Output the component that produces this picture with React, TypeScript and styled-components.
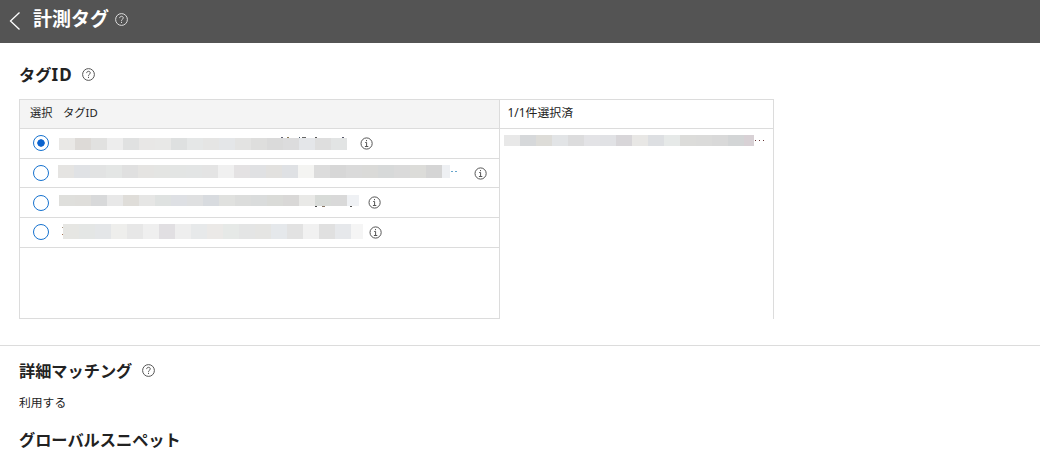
import React from "react";
import styled, { createGlobalStyle } from "styled-components";

const Global = createGlobalStyle`
  * { box-sizing: border-box; }
  body { margin: 0; background: #fff; color: #222; font-family: "Noto Sans", "Noto Sans CJK JP", sans-serif; }
  h1, h2, p { margin: 0; }
`;
const Page = styled.main`height: 456px; overflow: hidden; display: flex; flex-direction: column;`;
const Header = styled.header`
  height: 43px; flex: none; background: #545454; color: #fff;
  display: flex; align-items: center; padding: 0 0 5px 9px;
`;
const Back = styled.svg`width: 12px; height: 20px; margin: 4px 12px 0 0; fill: none; stroke: #fff; stroke-width: 1.3;`;
const PageTitle = styled.h1`font-size: 19px; line-height: 30px; font-weight: 700; white-space: nowrap; width: 82px;`;
const Badge = styled.svg<{ $color: string }>`
  width: 13px; height: 13px; flex: none; display: block; fill: none; stroke: ${(p) => p.$color}; stroke-width: 1;
`;
const TagSection = styled.section`height: 303px; flex: none; padding: 20px 0 0 19px; border-bottom: 1px solid #dcdcdc;`;
const Section = styled.section`padding: 13px 0 0 19px;`;
const Heading = styled.div`
  display: flex; align-items: center; height: 24px;
  svg { margin-bottom: 2px; }
`;
const Title = styled.h2<{ $gap?: number }>`
  font-size: 16.2px; line-height: 24px; font-weight: 700; white-space: nowrap; margin-right: ${(p) => p.$gap ?? 0}px;
`;
const Latin = styled.span`font-size: 17px; letter-spacing: 1.2px;`;
const Body = styled.p`font-size: 11.8px; line-height: 18px; margin: 10px 0 17px;`;
const Picker = styled.div`
  display: grid; grid-template-columns: 481px 274px; width: 755px; height: 220px; margin-top: 12px;
`;
const Available = styled.div`border: 1px solid #dcdcdc;`;
const Selected = styled.div`border: solid #dcdcdc; border-width: 1px 1px 0 0;`;
const ColumnHead = styled.div<{ $fill?: string }>`
  height: 29px; border-bottom: 1px solid #dcdcdc; background: ${(p) => p.$fill ?? "#fff"};
  font-size: ${(p) => (p.$fill ? 11.3 : 11.9)}px; line-height: ${(p) => (p.$fill ? 26 : 24)}px;
  display: flex; padding-left: ${(p) => (p.$fill ? 10 : 7.5)}px;
`;
const SelectLabel = styled.span`width: 33px; font-size: 11.2px;`;
const Row = styled.div<{ $h: number }>`
  height: ${(p) => p.$h}px; border-bottom: 1px solid #dcdcdc; display: flex; align-items: flex-start; padding-left: 13px;
`;
const Radio = styled.span<{ $on?: boolean; $top: number }>`
  width: 16px; height: 16px; flex: none; margin-top: ${(p) => p.$top}px; border: 1.4px solid #1672cf; border-radius: 50%;
  background: ${(p) => (p.$on ? "radial-gradient(circle, #0b63ce 3.4px, #fff 4px)" : "#fff")};
`;
const Mask = styled.div<{ $left: number; $top: number; $w: number; $h: number }>`
  position: relative; display: flex; flex: none;
  margin: ${(p) => p.$top}px 0 0 ${(p) => p.$left}px; width: ${(p) => p.$w}px; height: ${(p) => p.$h}px;
`;
const Cell = styled.i<{ $c: string; $last: boolean }>`flex: ${(p) => (p.$last ? "1 1 0" : "0 0 16px")}; background: ${(p) => p.$c};`;
const Specks = styled.svg`position: absolute; left: 0; top: 0; overflow: visible; width: 1px; height: 1px;`;
const InfoSlot = styled.span<{ $gap: number }>`margin: 8px 0 0 ${(p) => p.$gap}px;`;

const Help = ({ color = "#555" }: { color?: string }) => (
  <Badge $color={color} viewBox="0 0 13 13">
    <circle cx="6.5" cy="6.5" r="5.9" />
    <path d="M4.7 5.1C4.7 3.9 5.4 3.3 6.5 3.3S8.3 4 8.3 5C8.3 6.2 6.5 6.2 6.5 7.8M6.5 8.8V10" />
  </Badge>
);
const Info = () => (
  <Badge $color="#555" viewBox="0 0 13 13">
    <circle cx="6.6" cy="6.5" r="5.6" />
    <path d="M5.2 5.5H6.6V9.4M4.9 9.5H8.3M6.5 3V4.2" />
  </Badge>
);

type Speck = [number, number, number, string];
type Strip = { left: number; top: number; w: number; h: number; colors: string; specks?: Speck[] };
const MaskStrip = ({ left, top, w, h, colors, specks = [] }: Strip) => {
  const list = colors.split(" ");
  return (
    <Mask $left={left} $top={top} $w={w} $h={h}>
      {list.map((c, i) => <Cell key={i} $c={"#" + c} $last={i === list.length - 1} />)}
      <Specks>{specks.map(([x, y, width, fill], i) => <rect key={i} x={x} y={y} width={width} height="1" fill={fill} />)}</Specks>
    </Mask>
  );
};

const rows: { h: number; radioTop: number; gap: number; strip: Strip }[] = [
  { h: 30, radioTop: 6, gap: 13, strip: { left: 10, top: 9, w: 288, h: 12,
    colors: "e9e8e6 dddad7 e1e1e0 ededed e0e1e1 e8e7e6 e8e8e7 dee0e0 e5e7e7 e5e5e4 e4e6e8 e3e3e2 dededd dadada dcdcdd e4e6e9 dedede e2e4e4",
    specks: [[222, -1, 2, "#667"], [228, -1, 2, "#875"], [240, -1, 1, "#456"], [243, -1, 4, "#666"], [256, -1, 2, "#555"], [283, -1, 2, "#556"]] } },
  { h: 29, radioTop: 6, gap: 24, strip: { left: 9, top: 6, w: 392, h: 13,
    colors: "e5e4e2 e0e2e5 e2e3e3 e4e6e5 e0e0e0 e5e4e2 e4e5e3 e3e5e4 e3e5e5 e4e4e4 f0f0f0 e4e2e3 e0e1e3 e2e1df dfe1e4 f4f4f2 dcdcdc d7d7d7 dadada dadad8 d7d9d9 dadada dcdcd9 d5d5d5 eef0f3",
    specks: [[393, 6, 2, "#68a6cc"], [397, 6, 2, "#68a6cc"]] } },
  { h: 30, radioTop: 7, gap: 9, strip: { left: 10, top: 7, w: 300, h: 11,
    colors: "dfdfdc dfdedb d8d9da e8e8e8 dfddd9 e6e6e5 dfe2e1 dee0e4 dfe0e1 d8dbdf e0e1df dcdddc dadcdc dadbd8 d9d8d7 e9e9e7 d8dbd8 d9d9d9 eff1f4",
    specks: [[256, 11, 2, "#444"], [263, 11, 3, "#876"], [291, 11, 2, "#555"]] } },
  { h: 30, radioTop: 6, gap: 6, strip: { left: 14, top: 6, w: 300, h: 15,
    colors: "e6e6e3 e4e6e5 e4e6e8 eeeeec e7e7e7 efefef e1dfe2 eeeeee e7e9ea ebe9e7 e6e9e7 e4e5e5 e5e5e3 e5e8eb e2e2e2 f1f1f1 e0e0e0 e6e8eb f5f5f5",
    specks: [[-1, 3, 1, "#a98"], [-1, 10, 1, "#a75"]] } },
];

export default function App() {
  return (
    <Page>
      <Global />
      <Header>
        <Back viewBox="0 0 12 20"><path d="M10.5 1.5 1.5 10l9 8.5" /></Back>
        <PageTitle>計測タグ</PageTitle>
        <Help color="#ddd" />
      </Header>
      <TagSection>
        <Heading><Title $gap={9}>タグ<Latin>ID</Latin></Title><Help /></Heading>
        <Picker>
          <Available>
            <ColumnHead $fill="#f4f4f4"><SelectLabel>選択</SelectLabel><span>タグID</span></ColumnHead>
            {rows.map((r, i) => (
              <Row key={i} $h={r.h}>
                <Radio $on={i === 0} $top={r.radioTop} />
                <MaskStrip {...r.strip} />
                <InfoSlot $gap={r.gap}><Info /></InfoSlot>
              </Row>
            ))}
          </Available>
          <Selected>
            <ColumnHead>1/1件選択済</ColumnHead>
            <MaskStrip left={4} top={6} w={250} h={11}
              colors="e8e8e8 d6d8da dddcd8 e2e4e6 dcdcdd e3e3e6 e1e2e5 d8d6d9 e8e7e5 dddfe2 e6e9e8 dcdcda dbdbda d9d9d9 d3d5d6 d8d1d5"
              specks={[[251, 5, 1, "#633"], [255, 5, 1, "#633"], [259, 5, 1, "#633"]]} />
          </Selected>
        </Picker>
      </TagSection>
      <Section>
        <Heading><Title $gap={10}>詳細マッチング</Title><Help /></Heading>
        <Body>利用する</Body>
        <Heading><Title>グローバルスニペット</Title></Heading>
      </Section>
    </Page>
  );
}
